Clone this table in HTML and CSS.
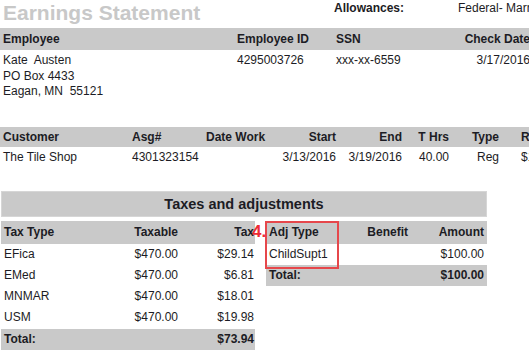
FILE: index.html
```html
<!DOCTYPE html>
<html>
<head>
<meta charset="utf-8">
<title>Earnings Statement</title>
<link rel="stylesheet" href="styles.css">
</head>
<body>
<div class="page">
  <div class="top">
    <div class="title">Earnings Statement</div>
    <div class="allow">
      <span class="allow-label">Allowances:</span>
      <span class="allow-val">Federal- Married</span>
    </div>
  </div>

  <div class="emp">
    <div class="band grid-emp">
      <div class="c1">Employee</div>
      <div>Employee ID</div>
      <div>SSN</div>
      <div class="r">Check Date</div>
    </div>
    <div class="grid-emp emp-body">
      <div class="c1">Kate&nbsp; Austen<br>PO Box 4433<br>Eagan, MN&nbsp; 55121</div>
      <div>4295003726</div>
      <div>xxx-xx-6559</div>
      <div class="r">3/17/2016</div>
    </div>
  </div>

  <div class="asg">
    <div class="band band2 grid-asg">
      <div class="c1">Customer</div>
      <div>Asg#</div>
      <div>Date Work</div>
      <div class="r">Start</div>
      <div class="r">End</div>
      <div class="r">T Hrs</div>
      <div class="r">Type</div>
      <div class="c8">Rate</div>
    </div>
    <div class="grid-asg asg-body">
      <div class="c1">The Tile Shop</div>
      <div>4301323154</div>
      <div></div>
      <div class="r">3/13/2016</div>
      <div class="r">3/19/2016</div>
      <div class="r">40.00</div>
      <div class="r">Reg</div>
      <div class="c8">$11.75</div>
    </div>
  </div>

  <div class="taxes">
    <div class="taxes-title">Taxes and adjustments</div>
    <div class="tables">
      <div class="tax-table">
        <div class="thead grid-tax">
          <div class="c1">Tax Type</div>
          <div class="r">Taxable</div>
          <div class="r">Tax</div>
        </div>
        <div class="trow grid-tax"><div class="c1">EFica</div><div class="r">$470.00</div><div class="r">$29.14</div></div>
        <div class="trow grid-tax"><div class="c1">EMed</div><div class="r">$470.00</div><div class="r">$6.81</div></div>
        <div class="trow grid-tax"><div class="c1">MNMAR</div><div class="r">$470.00</div><div class="r">$18.01</div></div>
        <div class="trow grid-tax"><div class="c1">USM</div><div class="r">$470.00</div><div class="r">$19.98</div></div>
        <div class="ttotal grid-tax"><div class="c1">Total:</div><div></div><div class="r">$73.94</div></div>
      </div>
      <div class="adj-table">
        <div class="thead grid-adj">
          <div class="c1">Adj Type</div>
          <div class="r">Benefit</div>
          <div class="r">Amount</div>
        </div>
        <div class="trow grid-adj"><div class="c1">ChildSupt1</div><div></div><div class="r">$100.00</div></div>
        <div class="ttotal adj-total grid-adj"><div class="c1">Total:</div><div></div><div class="r">$100.00</div></div>
      </div>
    </div>
    <div class="mark-box"></div>
    <div class="mark-num">4.</div>
  </div>
</div>
</body>
</html>
```

FILE: styles.css
```css
html, body {
  margin: 0;
  padding: 0;
  overflow: hidden;
  background: #ffffff;
}

.page {
  width: 620px;
  font-family: "Liberation Sans", Arial, sans-serif;
  font-size: 12px;
  color: #1c1c24;
}

.top {
  display: flex;
  height: 28px;
}

.title {
  width: 334px;
  padding-left: 3px;
  box-sizing: border-box;
  font-size: 21px;
  font-weight: bold;
  line-height: 24px;
  padding-top: 1px;
  color: #c8c8c8;
}

.allow {
  display: flex;
  line-height: 16px;
}

.allow-label {
  font-weight: bold;
  width: 124px;
}

.band {
  background: #c9c9c9;
  font-weight: bold;
  height: 22px;
  line-height: 22px;
}

.band2 {
  height: 20px;
  line-height: 20px;
}

.c1 {
  padding-left: 3px;
}

.r {
  text-align: right;
}

.grid-emp {
  display: grid;
  grid-template-columns: 237px 99px 96px 98px;
}

.emp-body {
  padding-top: 3px;
  line-height: 15.5px;
}

.asg {
  margin-top: 27px;
}

.grid-asg {
  display: grid;
  grid-template-columns: 132px 74px 70px 60px 66px 47px 50px 100px;
}

.c8 {
  padding-left: 22px;
}

.asg-body {
  padding-top: 2px;
  line-height: 16px;
}

.taxes {
  position: relative;
  margin-top: 26px;
  margin-left: 1px;
  width: 486px;
}

.taxes-title {
  background: #c9c9c9;
  height: 26px;
  line-height: 26px;
  text-align: center;
  font-size: 14.5px;
  font-weight: bold;
  box-shadow: inset 0 0 0 1px #d6d6d6;
}

.tables {
  display: grid;
  grid-template-columns: 254px 221px;
  column-gap: 11px;
  margin-top: 4px;
  align-items: start;
}

.grid-tax {
  display: grid;
  grid-template-columns: 100px 78px 76px;
}

.grid-tax .r {
  padding-right: 1px;
}

.grid-adj {
  display: grid;
  grid-template-columns: 72px 71px 78px;
}

.grid-adj .r:nth-child(2) {
  padding-right: 1px;
}

.grid-adj .r:nth-child(3) {
  padding-right: 3px;
}

.thead {
  background: #c9c9c9;
  font-weight: bold;
  height: 23px;
  line-height: 23px;
}

.trow {
  height: 21px;
  line-height: 21px;
}

.ttotal {
  background: #c9c9c9;
  font-weight: bold;
  height: 21px;
  line-height: 21px;
  margin-top: 1px;
}

.adj-total {
  margin-top: 0;
}

.mark-box {
  position: absolute;
  left: 264px;
  top: 30px;
  width: 70px;
  height: 44px;
  border: 2px solid #e6474b;
}

.mark-num {
  position: absolute;
  left: 251px;
  top: 32px;
  font-size: 17px;
  font-weight: bold;
  line-height: 17px;
  color: #ee2b33;
}
```
